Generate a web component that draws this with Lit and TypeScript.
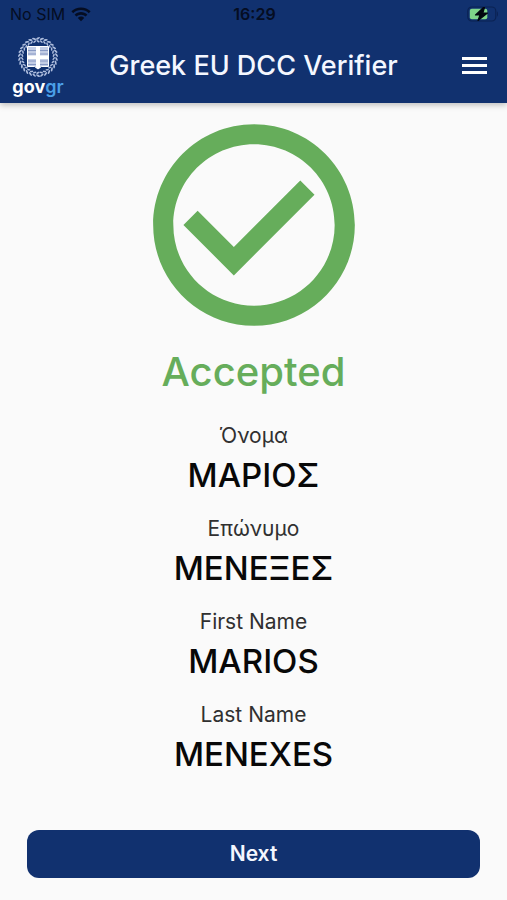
import { LitElement, html, css, svg } from "lit";
import { customElement, property } from "lit/decorators.js";

@customElement("status-bar")
class StatusBar extends LitElement {
  static styles = css`
    :host {
      display: grid;
      grid-template-columns: 1fr auto 1fr;
      align-items: center;
      height: 28px;
      padding: 0 8px 0 10px;
      color: #050d22;
      font-size: 16px;
      line-height: 20px;
    }
    .carrier {
      display: flex;
      align-items: center;
      gap: 6px;
    }
    .time {
      font-weight: 600;
    }
    .battery {
      justify-self: end;
    }
    svg {
      display: block;
    }
  `;

  render() {
    return html`
      <span class="carrier">
        No SIM
        <svg width="20" height="15" viewBox="0 0 20 15" fill="currentColor" aria-label="Wi-Fi">
          <path d="M10 0.5C13.7 0.5 17.1 1.9 19.6 4.3L17.8 6.2C15.8 4.2 13 3.1 10 3.1S4.2 4.2 2.2 6.2L0.4 4.3C2.9 1.9 6.3 0.5 10 0.5Z" />
          <path d="M10 5.1C12.4 5.1 14.7 6.1 16.4 7.7L14.5 9.6C13.3 8.4 11.7 7.7 10 7.7S6.7 8.4 5.5 9.6L3.6 7.7C5.3 6.1 7.6 5.1 10 5.1Z" />
          <path d="M10 9.6C11.2 9.6 12.3 10.1 13.2 10.9L10 14.2L6.8 10.9C7.7 10.1 8.8 9.6 10 9.6Z" />
        </svg>
      </span>
      <span class="time">16:29</span>
      <svg class="battery" width="32" height="16" viewBox="0 0 32 16" aria-label="Battery charging">
        <rect x="0.8" y="1" width="28" height="14" rx="4" fill="none" stroke="#0b2253" stroke-width="1.2" />
        <path d="M30 5.5C31.3 6 31.3 10 30 10.5Z" fill="#0b2253" />
        <rect x="2.8" y="2.8" width="17.5" height="10.4" rx="2" fill="#7fd58a" />
        <path d="M16.5 1.5L8.5 9H13L11 14.5L20.5 7H15.8L17.5 1.5Z" fill="#02060f" stroke="#02060f" stroke-width="1.2" stroke-linejoin="round" />
      </svg>
    `;
  }
}

@customElement("gov-logo")
class GovLogo extends LitElement {
  static styles = css`
    :host {
      display: flex;
      flex-direction: column;
      align-items: center;
      width: 52px;
    }
    svg {
      display: block;
    }
    .word {
      color: #fff;
      font-size: 18px;
      font-weight: 700;
      line-height: 18px;
    }
    .tail {
      color: #4ba0e8;
      font-weight: 600;
    }
  `;

  private leaves() {
    const count = 30;
    return Array.from({ length: count }, (_, i) => {
      const angle = (i * 360) / count;
      const tilt = angle < 180 ? -30 : 30;
      return svg`
        <g transform="rotate(${angle} 21 21)">
          <ellipse cx="21" cy="2.4" rx="2.2" ry="0.9" transform="rotate(${tilt} 21 2.4)" />
          <ellipse cx="21" cy="5.2" rx="1.8" ry="0.8" transform="rotate(${-tilt} 21 5.2)" />
        </g>`;
    });
  }

  render() {
    return html`
      <svg width="42" height="42" viewBox="0 0 42 42" aria-hidden="true">
        <g fill="#aebddd">${this.leaves()}</g>
        <path d="M10.5 10.5H31.5V30.5H24.5L21 33L17.5 30.5H10.5Z" fill="#c3cde5" />
        <path d="M11 14.5H31M11 18H31M11 25H31M11 28.5H31" stroke="#8193bf" stroke-width="0.9" />
        <path d="M19 10.5H23V19.5H31.5V23H23V31.5L21 33L19 31.5V23H10.5V19.5H19Z" fill="#fff" />
        <path d="M10.5 10.5H31.5V30.5H24.5L21 33L17.5 30.5H10.5Z" fill="none" stroke="#fff" />
      </svg>
      <span class="word">gov<span class="tail">gr</span></span>
    `;
  }
}

@customElement("name-field")
class NameField extends LitElement {
  @property() label = "";
  @property() value = "";

  static styles = css`
    :host {
      display: block;
      text-align: center;
    }
    dl,
    dd {
      margin: 0;
    }
    dt {
      color: #303030;
      font-size: 21px;
      line-height: 28px;
    }
    dd {
      color: #080808;
      font-size: 33px;
      font-weight: 500;
      line-height: 50px;
    }
  `;

  render() {
    return html`<dl><dt>${this.label}</dt><dd>${this.value}</dd></dl>`;
  }
}

@customElement("app-root")
class AppRoot extends LitElement {
  static styles = css`
    :host {
      display: flex;
      flex-direction: column;
      min-height: 100vh;
      background: #fafafa;
      font-family: Inter, "Noto Sans", sans-serif;
    }
    .top {
      background: #11316f;
      box-shadow: 0 2px 6px rgba(0, 0, 0, 0.25);
    }
    .bar {
      display: grid;
      grid-template-columns: 52px 1fr 52px;
      align-items: center;
      height: 75px;
      padding: 0 12px;
    }
    h1 {
      margin: 0;
      color: #f4f7ff;
      font-size: 27px;
      font-weight: 500;
      line-height: 32px;
      text-align: center;
    }
    button {
      border: 0;
      font-family: inherit;
      cursor: pointer;
    }
    .menu {
      display: flex;
      justify-content: flex-end;
      padding: 8px;
      background: none;
      color: #fff;
    }
    main {
      flex: 1;
      display: flex;
      flex-direction: column;
      align-items: center;
    }
    .check {
      display: block;
      width: 242px;
      height: 242px;
      margin-top: 1px;
      color: #66ad5b;
    }
    h2 {
      margin: 0 0 24px;
      color: #66ad5b;
      font-size: 40px;
      font-weight: 500;
      line-height: 52px;
    }
    .fields {
      display: flex;
      flex-direction: column;
      gap: 15px;
    }
    footer {
      display: flex;
      padding: 22px 27px;
    }
    .next {
      flex: 1;
      height: 48px;
      border-radius: 12px;
      background: #11316f;
      color: #f4f7ff;
      font-size: 21px;
      font-weight: 600;
      line-height: 28px;
    }
  `;

  private fields = [
    { label: "Όνομα", value: "ΜΑΡΙΟΣ" },
    { label: "Επώνυμο", value: "ΜΕΝΕΞΕΣ" },
    { label: "First Name", value: "MARIOS" },
    { label: "Last Name", value: "MENEXES" },
  ];

  render() {
    return html`
      <header class="top">
        <status-bar></status-bar>
        <div class="bar">
          <gov-logo></gov-logo>
          <h1>Greek EU DCC Verifier</h1>
          <button class="menu" aria-label="Menu">
            <svg width="25" height="17" viewBox="0 0 25 17" fill="currentColor">
              <path d="M0 0H25V3H0ZM0 7H25V10H0ZM0 14H25V17H0Z" />
            </svg>
          </button>
        </div>
      </header>
      <main>
        <svg class="check" viewBox="0 0 24 24" fill="currentColor" aria-hidden="true">
          <path
            d="M16.59 7.58 10 14.17 6.41 10.59 5 12 10 17 18 9ZM12 2C6.48 2 2 6.48 2 12S6.48 22 12 22 22 17.52 22 12 17.52 2 12 2ZM12 20C7.58 20 4 16.42 4 12S7.58 4 12 4 20 7.58 20 12 16.42 20 12 20Z"
          />
        </svg>
        <h2>Accepted</h2>
        <div class="fields">
          ${this.fields.map((f) => html`<name-field .label=${f.label} .value=${f.value}></name-field>`)}
        </div>
      </main>
      <footer><button class="next">Next</button></footer>
    `;
  }
}
